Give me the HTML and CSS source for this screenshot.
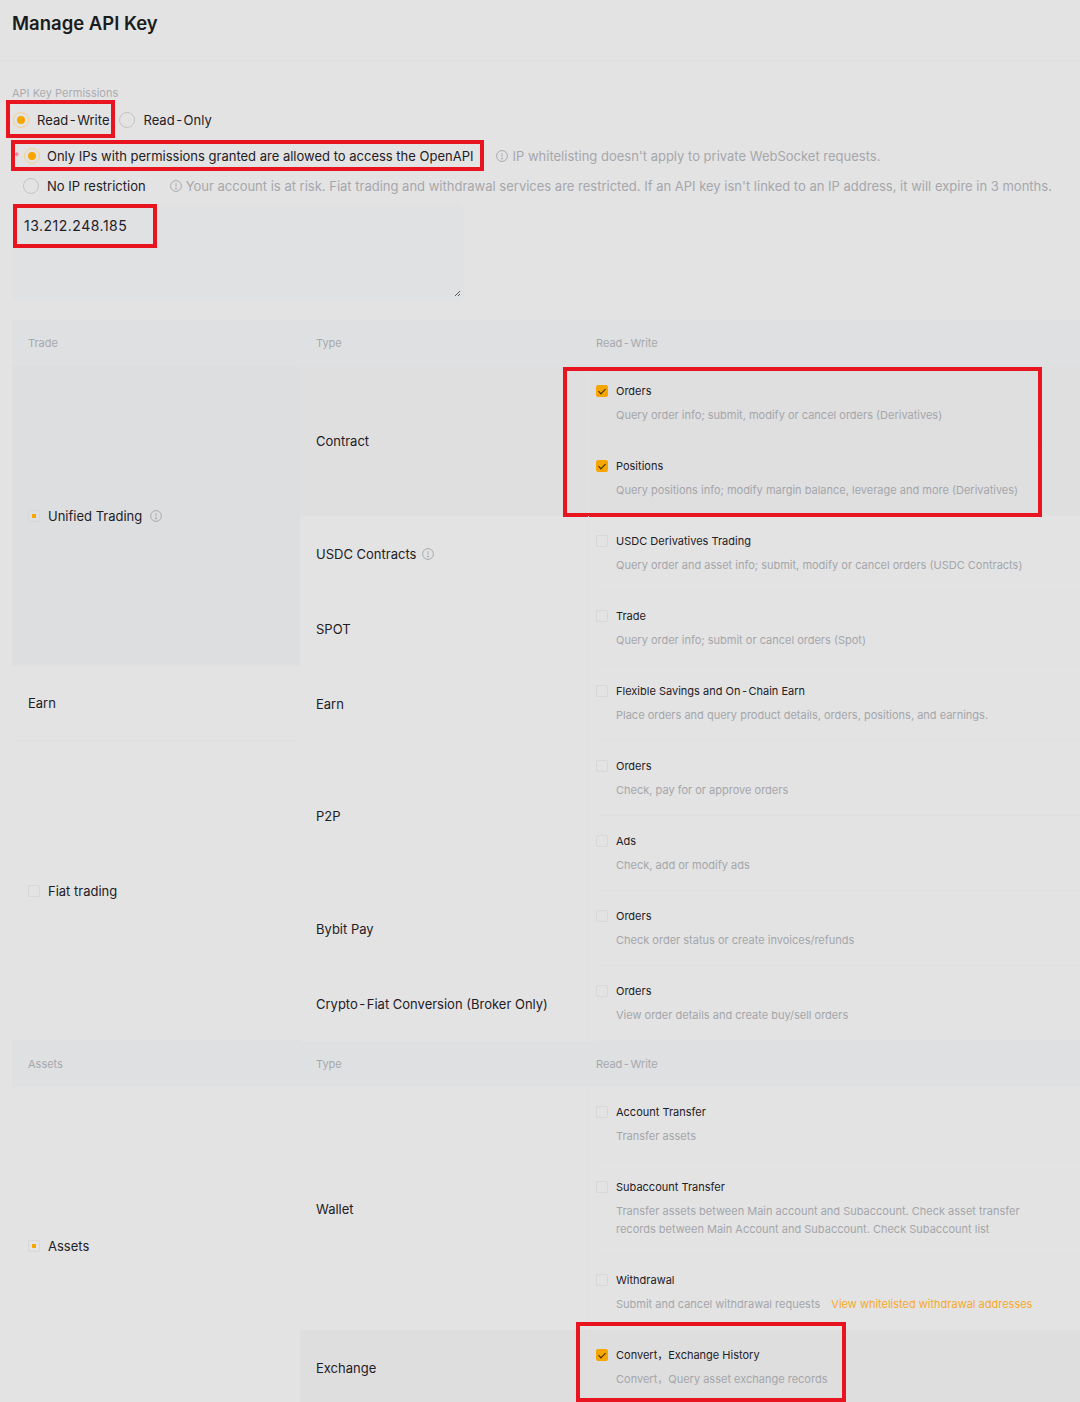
FILE: index.html
```html
<!DOCTYPE html>
<html>
<head>
    <title>Manage API Key</title>
    <link rel="stylesheet" href="styles.css">
</head>
<body>
    <div class="page-header">
        <h1>Manage API Key</h1>
    </div>

    <div class="form">
        <div class="field-label">API Key Permissions</div>

        <div class="radio-group">
            <label class="radio-option">
                <span class="radio checked"></span>
                <span>Read<span class="dash">-</span>Write</span>
                <span class="mark mark-rw"></span>
            </label>
            <label class="radio-option">
                <span class="radio"></span>
                <span>Read<span class="dash">-</span>Only</span>
            </label>
        </div>

        <div class="ip-row">
            <span class="ip-option">
                <span class="required">*</span>
                <span class="radio checked"></span>
                <span>Only IPs with permissions granted are allowed to access the OpenAPI</span>
                <span class="mark mark-ip"></span>
            </span>
            <span class="hint">
                <svg class="info" viewBox="0 0 12 12"><circle cx="6" cy="6" r="5.4" /><path d="M6 3.2v3.4" /><circle class="dot" cx="6" cy="8.5" r="0.6" /></svg>
                IP whitelisting doesn't apply to private WebSocket requests.
            </span>
        </div>

        <div class="ip-row no-ip">
            <span class="ip-option">
                <span class="radio"></span>
                <span>No IP restriction</span>
            </span>
            <span class="hint">
                <svg class="info" viewBox="0 0 12 12"><circle cx="6" cy="6" r="5.4" /><path d="M6 3.2v3.4" /><circle class="dot" cx="6" cy="8.5" r="0.6" /></svg>
                Your account is at risk. Fiat trading and withdrawal services are restricted. If an API key isn't linked to an IP address, it will expire in 3 months.
            </span>
        </div>

        <div class="ip-box">
            <span class="ip-value">13.212.248.185</span>
            <span class="mark mark-addr"></span>
            <svg class="resize" viewBox="0 0 8 8"><path d="M7 2L2 7M7 5L5 7" /></svg>
        </div>

        <div class="perm-table">
            <!-- Trade -->
            <div class="perm-head">
                <div class="c1">Trade</div>
                <div class="c2">Type</div>
                <div class="c3">Read<span class="dash">-</span>Write</div>
            </div>

            <div class="group">
                <div class="c1 dark">
                    <span class="check partial"></span>
                    Unified Trading
                    <svg class="info" viewBox="0 0 12 12"><circle cx="6" cy="6" r="5.4" /><path d="M6 3.2v3.4" /><circle class="dot" cx="6" cy="8.5" r="0.6" /></svg>
                </div>
                <div class="types">
                    <div class="type-row dim">
                        <div class="c2">Contract</div>
                        <div class="c3">
                            <div class="item">
                                <div class="item-title"><span class="check on"></span>Orders</div>
                                <div class="item-desc">Query order info; submit, modify or cancel orders (Derivatives)</div>
                            </div>
                            <div class="item">
                                <div class="item-title"><span class="check on"></span>Positions</div>
                                <div class="item-desc">Query positions info; modify margin balance, leverage and more (Derivatives)</div>
                            </div>
                            <span class="mark mark-contract"></span>
                        </div>
                    </div>
                    <div class="type-row">
                        <div class="c2">
                            USDC Contracts
                            <svg class="info" viewBox="0 0 12 12"><circle cx="6" cy="6" r="5.4" /><path d="M6 3.2v3.4" /><circle class="dot" cx="6" cy="8.5" r="0.6" /></svg>
                        </div>
                        <div class="c3">
                            <div class="item">
                                <div class="item-title"><span class="check"></span>USDC Derivatives Trading</div>
                                <div class="item-desc">Query order and asset info; submit, modify or cancel orders (USDC Contracts)</div>
                            </div>
                        </div>
                    </div>
                    <div class="type-row">
                        <div class="c2">SPOT</div>
                        <div class="c3">
                            <div class="item">
                                <div class="item-title"><span class="check"></span>Trade</div>
                                <div class="item-desc">Query order info; submit or cancel orders (Spot)</div>
                            </div>
                        </div>
                    </div>
                </div>
            </div>

            <div class="group">
                <div class="c1">Earn</div>
                <div class="types">
                    <div class="type-row">
                        <div class="c2">Earn</div>
                        <div class="c3">
                            <div class="item">
                                <div class="item-title"><span class="check"></span><span>Flexible Savings and On<span class="dash">-</span>Chain Earn</span></div>
                                <div class="item-desc">Place orders and query product details, orders, positions, and earnings.</div>
                            </div>
                        </div>
                    </div>
                </div>
            </div>

            <div class="group">
                <div class="c1"><span class="check"></span>Fiat trading</div>
                <div class="types">
                    <div class="type-row">
                        <div class="c2">P2P</div>
                        <div class="c3">
                            <div class="item">
                                <div class="item-title"><span class="check"></span>Orders</div>
                                <div class="item-desc">Check, pay for or approve orders</div>
                            </div>
                            <div class="item">
                                <div class="item-title"><span class="check"></span>Ads</div>
                                <div class="item-desc">Check, add or modify ads</div>
                            </div>
                        </div>
                    </div>
                    <div class="type-row">
                        <div class="c2">Bybit Pay</div>
                        <div class="c3">
                            <div class="item">
                                <div class="item-title"><span class="check"></span>Orders</div>
                                <div class="item-desc">Check order status or create invoices/refunds</div>
                            </div>
                        </div>
                    </div>
                    <div class="type-row">
                        <div class="c2"><span>Crypto<span class="dash">-</span>Fiat Conversion (Broker Only)</span></div>
                        <div class="c3">
                            <div class="item">
                                <div class="item-title"><span class="check"></span>Orders</div>
                                <div class="item-desc">View order details and create buy/sell orders</div>
                            </div>
                        </div>
                    </div>
                </div>
            </div>

            <!-- Assets -->
            <div class="perm-head">
                <div class="c1">Assets</div>
                <div class="c2">Type</div>
                <div class="c3">Read<span class="dash">-</span>Write</div>
            </div>

            <div class="group">
                <div class="c1"><span class="check partial"></span>Assets</div>
                <div class="types">
                    <div class="type-row">
                        <div class="c2">Wallet</div>
                        <div class="c3">
                            <div class="item">
                                <div class="item-title"><span class="check"></span>Account Transfer</div>
                                <div class="item-desc">Transfer assets</div>
                            </div>
                            <div class="item">
                                <div class="item-title"><span class="check"></span>Subaccount Transfer</div>
                                <div class="item-desc wrap">Transfer assets between Main account and Subaccount. Check asset transfer records between Main Account and Subaccount. Check Subaccount list</div>
                            </div>
                            <div class="item">
                                <div class="item-title"><span class="check"></span>Withdrawal</div>
                                <div class="item-desc">Submit and cancel withdrawal requests <a class="link">View whitelisted withdrawal addresses</a></div>
                            </div>
                        </div>
                    </div>
                    <div class="type-row dark">
                        <div class="c2">Exchange</div>
                        <div class="c3">
                            <div class="item">
                                <div class="item-title"><span class="check on"></span>Convert，Exchange History</div>
                                <div class="item-desc">Convert，Query asset exchange records</div>
                            </div>
                            <span class="mark mark-convert"></span>
                        </div>
                    </div>
                </div>
            </div>
        </div>
    </div>
</body>
</html>
```

FILE: styles.css
```css
body {
    margin: 0;
    background-color: #e3e3e3;
    color: #1e2026;
    font-family: Inter, "Noto Sans", "Noto Sans CJK SC", sans-serif;
    font-size: 13px;
    line-height: 18px;
}

.page-header {
    padding: 9px 12px 23px;
    border-bottom: 1px solid #dfdfdf;
}

h1 {
    margin: 0;
    font-size: 18.5px;
    line-height: 28px;
    font-weight: 600;
    color: #1a1c20;
}

.form {
    padding-left: 12px;
}

.field-label {
    margin-top: 24px;
    font-size: 11px;
    line-height: 16px;
    color: #abacb1;
}

.dash {
    margin: 0 1.5px;
}

/* radios */

.radio-group {
    display: flex;
    gap: 10px;
    margin-top: 7px;
    padding-left: 1px;
}

.radio-option {
    position: relative;
    display: flex;
    align-items: center;
    gap: 8px;
    height: 24px;
}

.radio {
    display: inline-block;
    box-sizing: border-box;
    width: 16px;
    height: 16px;
    border: 1px solid #c4c4c6;
    border-radius: 50%;
    position: relative;
    flex-shrink: 0;
}

.radio.checked {
    border-color: #f8cf8c;
}

.radio.checked::after {
    content: "";
    position: absolute;
    left: 3px;
    top: 3px;
    width: 8px;
    height: 8px;
    border-radius: 50%;
    background-color: #f7a600;
}

.ip-row {
    display: flex;
    align-items: center;
    gap: 23px;
    height: 24px;
    margin-top: 12px;
}

.ip-row.no-ip {
    margin-top: 6px;
    padding-left: 11px;
    gap: 24px;
}

.ip-option {
    position: relative;
    display: flex;
    align-items: center;
    gap: 7px;
}

.no-ip .ip-option {
    gap: 8px;
}

.required {
    width: 10px;
    margin-left: 2px;
    margin-right: -7px;
    color: #f3728a;
    font-size: 11px;
}

.hint {
    display: flex;
    align-items: center;
    gap: 4px;
    color: #a6a7ac;
    white-space: nowrap;
}

.info {
    width: 12px;
    height: 12px;
    flex-shrink: 0;
    fill: none;
    stroke: #a9aaaf;
    stroke-width: 1;
}

.info .dot {
    fill: #a9aaaf;
}

/* ip textarea */

.ip-box {
    position: relative;
    box-sizing: border-box;
    width: 452px;
    height: 95px;
    margin-top: 7px;
    padding: 12px;
    background-color: #e0e1e3;
    border-radius: 6px;
    color: #1e2026;
}

.ip-value {
    font-size: 14px;
    letter-spacing: 0.5px;
}

.resize {
    position: absolute;
    right: 3px;
    bottom: 3px;
    width: 8px;
    height: 8px;
    fill: none;
    stroke: #55575c;
    stroke-width: 1;
}

/* permissions table */

.perm-table {
    margin-top: 20px;
}

.perm-head,
.group,
.type-row {
    display: flex;
}

.perm-head {
    height: 46px;
    align-items: center;
    background-color: #dfe0e2;
    font-size: 11px;
    color: #a6a8ad;
}

.c1,
.c2 {
    box-sizing: border-box;
    flex: 0 0 288px;
    display: flex;
    align-items: center;
    gap: 8px;
    padding-left: 16px;
}

.c2 {
    gap: 6px;
}

.c3 {
    flex: 1;
    position: relative;
    padding-left: 8px;
    border-left: 1px solid #e1e1e2;
}

.perm-head .c3 {
    border-left: none;
}

.group .c1 {
    border-bottom: 1px solid #dfdfe0;
}

.c1.dark {
    background-color: #dddee0;
}

.types {
    flex: 1;
}

.type-row.dim {
    background-color: #dfdfe0;
}

.type-row.dark {
    background-color: #dedede;
}

.item {
    padding: 16px 0;
    border-bottom: 1px solid #e0e0e1;
}

.item-title {
    display: flex;
    align-items: center;
    gap: 8px;
    margin-left: -1px;
    font-size: 11px;
    line-height: 18px;
    color: #1e2026;
}

.item-desc {
    margin-top: 6px;
    padding-left: 19px;
    font-size: 11px;
    line-height: 18px;
    color: #a4a6ab;
}

.item-desc.wrap {
    max-width: 420px;
}

.link {
    margin-left: 8px;
    color: #f7a92a;
}

/* checkboxes */

.check {
    position: relative;
    display: inline-block;
    box-sizing: border-box;
    width: 12px;
    height: 12px;
    border: 1px solid #d8d8da;
    border-radius: 2px;
    flex-shrink: 0;
}

.check.on {
    border-color: #f7a600;
    background-color: #f7a600;
}

.check.on::after {
    content: "";
    position: absolute;
    left: 3px;
    top: 1px;
    width: 3px;
    height: 6px;
    border-right: 1.2px solid #3a2a0a;
    border-bottom: 1.2px solid #3a2a0a;
    transform: rotate(45deg);
}

.check.partial::after {
    content: "";
    position: absolute;
    left: 3px;
    top: 3px;
    width: 4px;
    height: 4px;
    background-color: #f7a600;
}

/* red annotation boxes */

.mark {
    position: absolute;
    border: 4px solid #e8141f;
    pointer-events: none;
}

.mark-rw {
    left: -7px;
    top: -8px;
    right: -6px;
    bottom: -6px;
}

.mark-ip {
    left: -1px;
    top: -7px;
    right: -11px;
    bottom: -6px;
}

.mark-addr {
    left: 1px;
    top: -1px;
    width: 136px;
    height: 36px;
}

.mark-contract {
    left: -26px;
    top: 1px;
    right: 38px;
    bottom: -1px;
}

.mark-convert {
    left: -13px;
    top: -8px;
    width: 262px;
    height: 72px;
}
```
